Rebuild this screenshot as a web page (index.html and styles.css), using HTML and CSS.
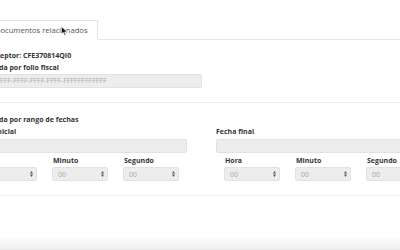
FILE: index.html
```html
<!DOCTYPE html>
<html lang="es">
<head>
<meta charset="utf-8">
<link rel="stylesheet" href="styles.css">
</head>
<body>
<div class="page">
  <div class="tabs">
    <div class="tab">Documentos relacionados</div>
  </div>
  <div class="section first">
    <div class="label">RFC Receptor: CFE370814QI0</div>
    <div class="label">Búsqueda por folio fiscal</div>
    <div class="input folio"><span class="ph">FFFFFFFF-FFFF-FFFF-FFFF-FFFFFFFFFFFF</span></div>
  </div>
  <div class="section">
    <div class="label">Búsqueda por rango de fechas</div>
    <div class="cols">
      <div class="col">
        <div class="label">Fecha inicial</div>
        <div class="input date"></div>
        <div class="time">
          <div class="field"><div class="label">Hora</div><div class="select"><span>00</span><svg class="arr" width="3" height="6" viewBox="0 0 3 6"><path d="M0 2.5L1.5 0L3 2.5Z M0 3.5L1.5 6L3 3.5Z" fill="#555"/></svg></div></div>
          <div class="field"><div class="label">Minuto</div><div class="select"><span>00</span><svg class="arr" width="3" height="6" viewBox="0 0 3 6"><path d="M0 2.5L1.5 0L3 2.5Z M0 3.5L1.5 6L3 3.5Z" fill="#555"/></svg></div></div>
          <div class="field"><div class="label">Segundo</div><div class="select"><span>00</span><svg class="arr" width="3" height="6" viewBox="0 0 3 6"><path d="M0 2.5L1.5 0L3 2.5Z M0 3.5L1.5 6L3 3.5Z" fill="#555"/></svg></div></div>
        </div>
      </div>
      <div class="col">
        <div class="label">Fecha final</div>
        <div class="input date"></div>
        <div class="time">
          <div class="field"><div class="label">Hora</div><div class="select"><span>00</span><svg class="arr" width="3" height="6" viewBox="0 0 3 6"><path d="M0 2.5L1.5 0L3 2.5Z M0 3.5L1.5 6L3 3.5Z" fill="#555"/></svg></div></div>
          <div class="field"><div class="label">Minuto</div><div class="select"><span>00</span><svg class="arr" width="3" height="6" viewBox="0 0 3 6"><path d="M0 2.5L1.5 0L3 2.5Z M0 3.5L1.5 6L3 3.5Z" fill="#555"/></svg></div></div>
          <div class="field"><div class="label">Segundo</div><div class="select"><span>00</span><svg class="arr" width="3" height="6" viewBox="0 0 3 6"><path d="M0 2.5L1.5 0L3 2.5Z M0 3.5L1.5 6L3 3.5Z" fill="#555"/></svg></div></div>
        </div>
      </div>
    </div>
  </div>
</div>
<div class="shade"></div>
<svg class="cursor" width="7" height="10" viewBox="0 0 7 10"><path d="M0.5 0.5L0.5 8L2.3 6.3L3.6 9.3L4.8 8.8L3.5 5.9L6 5.9Z" fill="#111" stroke="#fff" stroke-width="0.6"/></svg>
</body>
</html>
```
FILE: styles.css
```css
html, body {
  margin: 0;
  padding: 0;
}
body {
  width: 400px;
  height: 250px;
  overflow: hidden;
  position: relative;
  background: #fff;
  font-family: "Open Sans", "Noto Sans", sans-serif;
  font-size: 7px;
  color: #333;
  display: flex;
  flex-direction: column;
}
.page {
  margin-left: -27px;
  width: 460px;
}
.tabs {
  display: flex;
  padding-top: 20px;
  padding-left: 12px;
  border-bottom: 1px solid #e6e6e6;
}
.tab {
  box-sizing: border-box;
  height: 20px;
  margin-bottom: -1px;
  padding: 0 9px;
  line-height: 18px;
  border: 1px solid #e2e2e2;
  border-bottom-color: transparent;
  background: #fff;
  color: #555;
  font-size: 7.6px;
}
.section {
  padding-top: 11px;
  padding-bottom: 14px;
  border-bottom: 1px solid #eeeeee;
}
.section.first {
  padding-top: 10px;
}
.label {
  font-weight: 700;
  line-height: 12px;
  color: #333;
  white-space: nowrap;
}
.input {
  box-sizing: border-box;
  height: 14px;
  background: #ededed;
  border: 1px solid #e2e2e2;
  border-radius: 2px;
  padding-left: 8px;
  line-height: 12px;
}
.folio {
  width: 229px;
}
.ph {
  color: #ababab;
  font-size: 7px;
  white-space: nowrap;
}
.cols {
  display: grid;
  grid-template-columns: 214px 214px;
  column-gap: 29px;
}
.date {
  margin-top: 1px;
}
.time {
  display: grid;
  grid-template-columns: 56px 56px 56px;
  column-gap: 15px;
  padding-left: 8px;
  margin-top: 2px;
}
.field .label {
  padding-left: 1px;
}
.select {
  box-sizing: border-box;
  height: 14px;
  background: #ededed;
  border: 1px solid #e2e2e2;
  border-radius: 2px;
  display: flex;
  align-items: center;
  justify-content: space-between;
  padding: 0 3px 0 5px;
  color: #a8a8a8;
  font-size: 7px;
}
.arr {
  display: block;
}
.shade {
  margin-top: auto;
  height: 14px;
  background: linear-gradient(#ffffff, #f0f0f0 85%, #e6e6e6);
}
.cursor {
  position: absolute;
  left: 61px;
  top: 26px;
}
```
